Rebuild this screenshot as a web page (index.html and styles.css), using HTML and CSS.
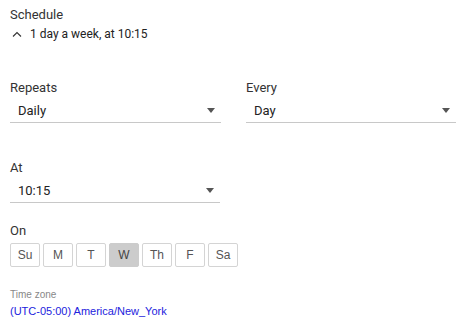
FILE: index.html
```html
<!DOCTYPE html>
<html lang="en">
<head>
  <meta charset="UTF-8" />
  <meta name="viewport" content="width=device-width, initial-scale=1.0" />
  <title>Schedule</title>
  <link rel="stylesheet" href="styles.css">
</head>
<body>
  <div class="schedule">
    <div class="label">Schedule</div>
    <div class="summary">
      <svg class="caret" width="10" height="6" viewBox="0 0 10 6"><path d="M1 5.5 L5 1.5 L9 5.5" fill="none" stroke="#333" stroke-width="1.1"/></svg>
      <span>1 day a week, at 10:15</span>
    </div>

    <div class="row">
      <div class="field">
        <div class="label">Repeats</div>
        <div class="select"><span>Daily</span><i class="arrow"></i></div>
      </div>
      <div class="field">
        <div class="label">Every</div>
        <div class="select"><span>Day</span><i class="arrow"></i></div>
      </div>
    </div>

    <div class="row at-row">
      <div class="field">
        <div class="label">At</div>
        <div class="select"><span>10:15</span><i class="arrow"></i></div>
      </div>
    </div>

    <div class="on">
      <div class="label">On</div>
      <div class="days">
        <button class="day">Su</button>
        <button class="day">M</button>
        <button class="day">T</button>
        <button class="day active">W</button>
        <button class="day">Th</button>
        <button class="day">F</button>
        <button class="day">Sa</button>
      </div>
    </div>

    <div class="tz">
      <div class="tz-label">Time zone</div>
      <a class="tz-link" href="#">(UTC-05:00) America/New_York</a>
    </div>
  </div>
</body>
</html>
```

FILE: styles.css
```css
body { margin: 0; background: #fff; font-family: Roboto, "Liberation Sans", sans-serif; color: #222; }
.schedule { padding: 7px 7px 0 10px; }
.label { font-size: 13px; color: #333; line-height: 16px; }
.summary { display: flex; align-items: center; gap: 8px; margin-top: 2px; font-size: 12px; line-height: 18px; color: #222; }
.caret { margin-left: 2px; }
.row { display: flex; gap: 25px; margin-top: 37px; }
.field { width: 211px; }
.row .field:last-child { width: 210px; }
.select {
  display: flex;
  align-items: center;
  justify-content: space-between;
  height: 21px;
  margin-top: 4px;
  padding: 0 6px 1px 8px;
  border-bottom: 1px solid #c8c8c8;
  font-size: 13px;
  color: #222;
}
.arrow {
  width: 0; height: 0;
  border-left: 4px solid transparent;
  border-right: 4px solid transparent;
  border-top: 5px solid #555;
}
.at-row { margin-top: 37px; }
.on { margin-top: 20px; }
.days { display: flex; gap: 3px; margin-top: 4px; }
.day {
  width: 30px; height: 24px;
  padding: 0;
  border: 1px solid #d4d4d4;
  border-radius: 2px;
  background: #fff;
  font-family: "Liberation Sans", Arial, sans-serif;
  font-size: 12px;
  color: #555;
}
.day.active { background: #ccc; border-color: #ccc; color: #444; }
.tz { margin-top: 21px; }
.tz-label { font-family: "Liberation Sans", Arial, sans-serif; font-size: 10px; color: #888; line-height: 14px; }
.tz-link { display: block; margin-top: 2px; font-family: "Liberation Sans", Arial, sans-serif; font-size: 11px; color: #2222dd; text-decoration: none; line-height: 14px; }
```
